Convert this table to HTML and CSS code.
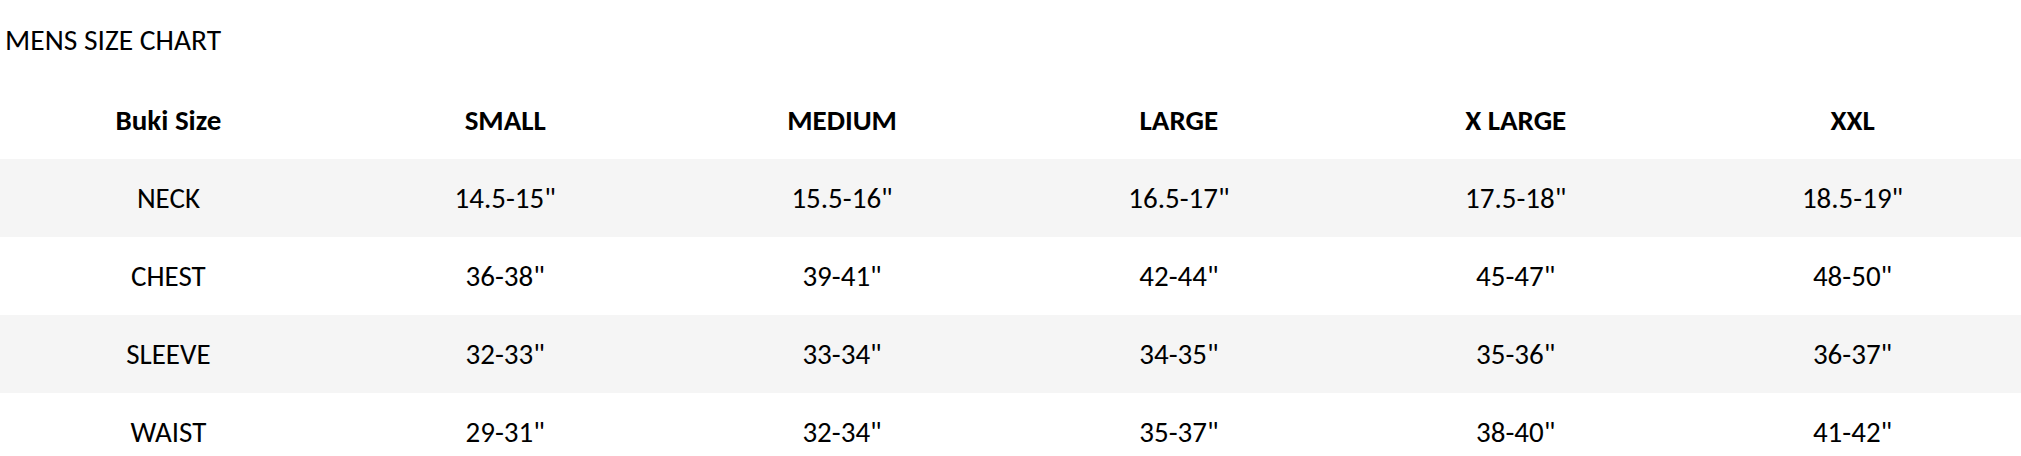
FILE: index.html
```html
<!DOCTYPE html>
<html>
<head>
<meta charset="utf-8">
<link rel="stylesheet" href="styles.css">
</head>
<body>
<div class="title">MENS SIZE CHART</div>
<table class="chart">
  <thead>
    <tr><th>Buki Size</th><th>SMALL</th><th>MEDIUM</th><th>LARGE</th><th>X LARGE</th><th>XXL</th></tr>
  </thead>
  <tbody>
    <tr><td>NECK</td><td>14.5-15"</td><td>15.5-16"</td><td>16.5-17"</td><td>17.5-18"</td><td>18.5-19"</td></tr>
    <tr><td>CHEST</td><td>36-38"</td><td>39-41"</td><td>42-44"</td><td>45-47"</td><td>48-50"</td></tr>
    <tr><td>SLEEVE</td><td>32-33"</td><td>33-34"</td><td>34-35"</td><td>35-36"</td><td>36-37"</td></tr>
    <tr><td>WAIST</td><td>29-31"</td><td>32-34"</td><td>35-37"</td><td>38-40"</td><td>41-42"</td></tr>
  </tbody>
</table>
</body>
</html>
```
FILE: styles.css
```css
html, body {
  margin: 0;
  padding: 0;
  background: #ffffff;
}
body {
  font-family: Carlito, Calibri, "Open Sans", sans-serif;
  color: #000000;
  font-size: 29px;
}
.title {
  height: 81px;
  line-height: 80px;
  padding-left: 5px;
  font-size: 29.5px;
}
.chart {
  width: 100%;
  border-collapse: collapse;
  table-layout: fixed;
}
.chart th, .chart td {
  height: 78px;
  padding: 0;
  text-align: center;
  vertical-align: middle;
}
.chart th {
  font-weight: bold;
}
.chart tbody tr:nth-child(odd) {
  background: #f5f5f5;
}
```
